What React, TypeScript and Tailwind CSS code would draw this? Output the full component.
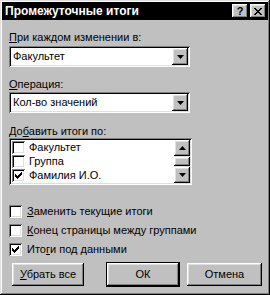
import React from 'react';

const raised =
  'shadow-[inset_-1px_-1px_0_#000,inset_1px_1px_0_#fff,inset_-2px_-2px_0_#808080,inset_2px_2px_0_#dfdfdf]';
const sunken =
  'shadow-[inset_1px_1px_0_#808080,inset_-1px_-1px_0_#fff,inset_2px_2px_0_#000,inset_-2px_-2px_0_#dfdfdf]';

const ArrowDown = () => (
  <svg width="7" height="4" viewBox="0 0 7 4">
    <path d="M0 0h7L3.5 4z" fill="#000" />
  </svg>
);

const ArrowUp = () => (
  <svg width="7" height="4" viewBox="0 0 7 4">
    <path d="M0 4h7L3.5 0z" fill="#000" />
  </svg>
);

const Check = () => (
  <svg width="7" height="7" viewBox="0 0 7 7" shapeRendering="crispEdges">
    <path d="M0 2h1v1h1v1h1V3h1V2h1V1h1V0h1v3H6v1H5v1H4v1H3v1H2V6H1V5H0z" fill="#000" />
  </svg>
);

const Box = ({ checked }: { checked?: boolean }) => (
  <div className={`w-[13px] h-[13px] bg-white shrink-0 flex items-center justify-center ${sunken}`}>
    {checked && <Check />}
  </div>
);

const Combo = ({ value }: { value: string }) => (
  <div className={`w-[181px] h-[21px] bg-white flex items-center p-[2px] ${sunken}`}>
    <span className="flex-1 pl-[2px] leading-none">{value}</span>
    <div className={`w-[16px] h-[17px] bg-[#c0c0c0] flex items-center justify-center ${raised}`}>
      <ArrowDown />
    </div>
  </div>
);

const Button = ({ children, width, isDefault }: { children: React.ReactNode; width: string; isDefault?: boolean }) => (
  <div
    className={`${width} h-[23px] bg-[#c0c0c0] flex items-center justify-center ${
      isDefault ? 'outline outline-1 outline-black' : ''
    } ${raised}`}
  >
    {children}
  </div>
);

export default function App() {
  const items = [
    { label: 'Факультет', checked: false },
    { label: 'Группа', checked: false },
    { label: 'Фамилия И.О.', checked: true },
  ];

  return (
    <div
      className="w-[270px] h-[295px] bg-[#c0c0c0] p-[2px] flex flex-col text-[11px] text-black shadow-[inset_-1px_-1px_0_#000,inset_1px_1px_0_#dfdfdf,inset_-2px_-2px_0_#808080,inset_2px_2px_0_#fff]"
      style={{ fontFamily: '"Liberation Sans", Arial, sans-serif' }}
    >
      <header className="h-[18px] bg-black flex items-center pl-[3px] pr-[2px] shrink-0">
        <span className="flex-1 text-white font-bold text-[12px] leading-none">Промежуточные итоги</span>
        <div className={`w-[16px] h-[14px] bg-[#c0c0c0] flex items-center justify-center font-bold text-[11px] leading-none ${raised}`}>
          ?
        </div>
        <div className={`w-[16px] h-[14px] bg-[#c0c0c0] ml-[2px] flex items-center justify-center ${raised}`}>
          <svg width="8" height="7" viewBox="0 0 8 7" shapeRendering="crispEdges">
            <path d="M0 0h2v1h1v1h2V1h1V0h2v1H7v1H6v1H5v1h1v1h1v1h1v1H6V6H5V5H3v1H2v1H0V6h1V5h1V4h1V3H2V2H1V1H0z" fill="#000" />
          </svg>
        </div>
      </header>

      <div className="flex flex-col pl-[7px]">
        <div className="mt-[11px] h-[13px] leading-[13px]">
          <span className="underline">П</span>ри каждом изменении в:
        </div>
        <div className="mt-[2px]">
          <Combo value="Факультет" />
        </div>

        <div className="mt-[11px] h-[13px] leading-[13px]">
          <span className="underline">О</span>перация:
        </div>
        <div className="mt-[1px]">
          <Combo value="Кол-во значений" />
        </div>

        <div className="mt-[12px] h-[13px] leading-[13px]">
          До<span className="underline">б</span>авить итоги по:
        </div>
        <div className={`w-[183px] h-[47px] bg-white flex p-[2px] ${sunken}`}>
          <div className="flex-1 flex flex-col">
            {items.map((it) => (
              <div key={it.label} className="h-[14px] flex items-center gap-[4px] pl-[1px]">
                <Box checked={it.checked} />
                <span className="leading-none">{it.label}</span>
              </div>
            ))}
          </div>
          <div className="w-[16px] flex flex-col bg-[#dfdfdf]">
            <div className={`h-[16px] bg-[#c0c0c0] flex items-center justify-center ${raised}`}>
              <ArrowUp />
            </div>
            <div className="flex-1 flex flex-col justify-center">
              <div className={`h-[9px] bg-[#c0c0c0] ${raised}`} />
            </div>
            <div className={`h-[16px] bg-[#c0c0c0] flex items-center justify-center ${raised}`}>
              <ArrowDown />
            </div>
          </div>
        </div>

        <div className="mt-[20px] flex flex-col gap-[6px]">
          <div className="flex items-center gap-[5px] h-[13px]">
            <Box />
            <span className="leading-none">
              <span className="underline">З</span>аменить текущие итоги
            </span>
          </div>
          <div className="flex items-center gap-[5px] h-[13px]">
            <Box />
            <span className="leading-none">
              <span className="underline">К</span>онец страницы между группами
            </span>
          </div>
          <div className="flex items-center gap-[5px] h-[13px]">
            <Box checked />
            <span className="leading-none">
              Ито<span className="underline">г</span>и под данными
            </span>
          </div>
        </div>

        <div className="mt-[7px] flex items-center">
          <div className="ml-[3px]">
            <Button width="w-[72px]">
              <span className="leading-none">
                <span className="underline">У</span>брать все
              </span>
            </Button>
          </div>
          <div className="ml-[23px]">
            <Button width="w-[72px]" isDefault>
              <span className="leading-none">ОК</span>
            </Button>
          </div>
          <div className="ml-[8px]">
            <Button width="w-[75px]">
              <span className="leading-none">Отмена</span>
            </Button>
          </div>
        </div>
      </div>
    </div>
  );
}
